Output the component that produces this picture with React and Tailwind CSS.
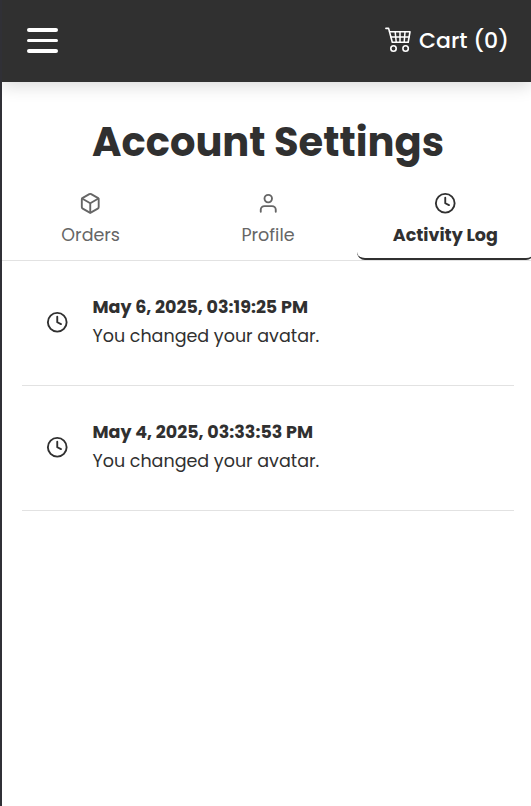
import React from "react";

const CartIcon = () => (
  <svg className="mt-[-2px]" width="26" height="26" viewBox="0 0 26 26" fill="none" stroke="white" strokeWidth="1.6" strokeLinecap="round" strokeLinejoin="round">
    <path d="M.9 1.4h2.7L7.3 15.2H23.2" />
    <path d="M4.6 4.8H25L23.2 15.2" />
    <path d="M6 10h18M10.2 5l1 10M15 5v10M20 5l-.8 10" strokeWidth="1.5" />
    <circle cx="8.5" cy="21.5" r="2.7" />
    <circle cx="20.6" cy="21.5" r="2.7" />
  </svg>
);

const Icon = ({ children }) => (
  <svg className="shrink-0" width="22.5" height="22.5" viewBox="0 0 24 24" fill="none" stroke="currentColor" strokeWidth="2" strokeLinecap="round" strokeLinejoin="round">
    {children}
  </svg>
);

const ClockIcon = () => (
  <Icon>
    <circle cx="12" cy="12" r="10" />
    <path d="M12 6v6l4 2" />
  </Icon>
);

const BoxIcon = () => (
  <Icon>
    <path d="M21 16V8a2 2 0 0 0-1-1.73l-7-4a2 2 0 0 0-2 0l-7 4A2 2 0 0 0 3 8v8a2 2 0 0 0 1 1.73l7 4a2 2 0 0 0 2 0l7-4A2 2 0 0 0 21 16z" />
    <path d="M3.27 6.96L12 12.01l8.73-5.05M12 22.08V12" />
  </Icon>
);

const UserIcon = () => (
  <Icon>
    <path d="M20 21v-2a4 4 0 0 0-4-4H8a4 4 0 0 0-4 4v2" />
    <circle cx="12" cy="7" r="4" />
  </Icon>
);

const Tab = ({ icon, children, active }) => (
  <div
    className={
      "flex h-[75px] w-[177.33px] shrink-0 flex-col items-center border-b-2 pt-[7px] " +
      (active ? "rounded-lg border-[#303030] text-[#303030]" : "border-transparent text-[#666666]")
    }
  >
    {icon}
    <div className="mt-[7.5px] h-[26px] leading-[26px] whitespace-nowrap">{children}</div>
  </div>
);

const Entry = ({ date }) => (
  <li className="flex h-[125px] items-center border-b border-[#e2e2e2] pb-[2px] pl-[24px]">
    <ClockIcon />
    <div className="ml-[24px] text-[17.5px] leading-[29px] whitespace-nowrap">
      <div className="font-bold">{date}</div>
      <div>You changed your avatar.</div>
    </div>
  </li>
);

export default function App() {
  return (
    <div className="h-[806px] w-[531px] overflow-hidden border-l-2 border-[#303036] bg-white font-['Poppins','Inter',sans-serif] text-[#303030]">
      <header className="flex h-[82px] items-center justify-between bg-[#303030] pr-[22px] pl-[25px] text-white shadow-[0_4px_16px_rgba(0,0,0,0.15)]">
        <button className="mt-[-1px] flex flex-col gap-[7px]" aria-label="Menu">
          <span className="h-[4px] w-[31px] rounded-full bg-white" />
          <span className="h-[3px] w-[31px] rounded-full bg-white" />
          <span className="h-[4px] w-[31px] rounded-full bg-white" />
        </button>
        <div className="flex items-center gap-[8px]">
          <CartIcon />
          <span className="text-[22px] leading-[30px] font-medium whitespace-nowrap">Cart (0)</span>
        </div>
      </header>
      <h1 className="mt-[30px] h-[60px] pl-[3px] text-center text-[40px] leading-[60px] font-bold whitespace-nowrap">Account Settings</h1>
      <nav className="mt-[13px] flex h-[76px] border-b border-[#e2e2e2] text-[17.5px]">
        <Tab icon={<BoxIcon />}>Orders</Tab>
        <Tab icon={<UserIcon />}>Profile</Tab>
        <Tab icon={<ClockIcon />} active>
          <span className="font-bold">Activity Log</span>
        </Tab>
      </nav>
      <ul className="mr-[17px] ml-[20px]">
        <Entry date="May 6, 2025, 03:19:25 PM" />
        <Entry date="May 4, 2025, 03:33:53 PM" />
      </ul>
    </div>
  );
}
